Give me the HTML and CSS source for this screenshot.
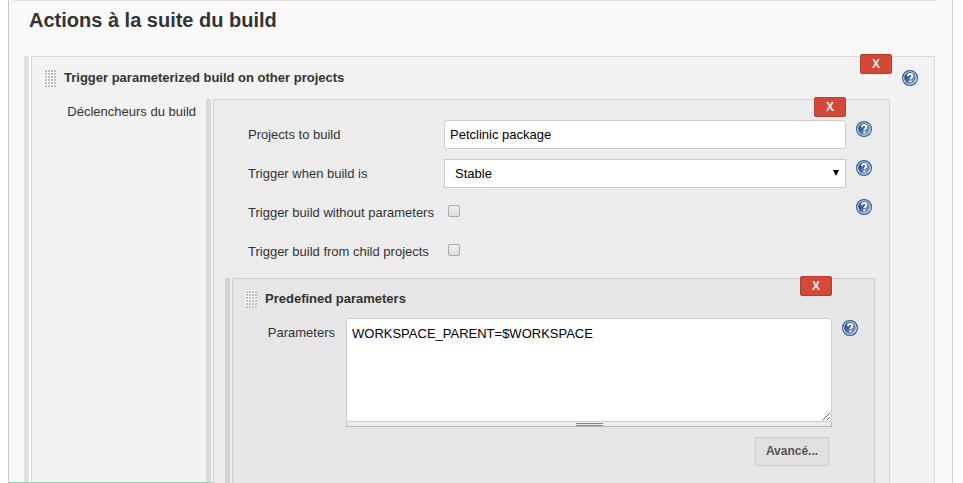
FILE: index.html
```html
<!DOCTYPE html>
<html lang="fr">
<head>
<meta charset="utf-8">
<title>Configuration du build</title>
<link rel="stylesheet" href="styles.css">
</head>
<body>
<svg class="defs" aria-hidden="true">
  <defs>
    <linearGradient id="blue" x1="0" y1="0" x2="1" y2="1">
      <stop offset="0.2" stop-color="#1d4884"/>
      <stop offset="0.9" stop-color="#86a8d4"/>
    </linearGradient>
    <symbol id="help" viewBox="0 0 16 16">
      <circle cx="8" cy="8" r="7.4" fill="#f4f7fb" stroke="#2c5794" stroke-width="1.2"/>
      <circle cx="8" cy="8" r="5.9" fill="url(#blue)"/>
      <path d="M5.7 6.3C5.8 4.7 6.7 4 8.1 4s2.3.8 2.3 2c0 1.5-2 1.7-2 3.3" fill="none" stroke="#fff" stroke-width="1.9"/>
      <path d="M7.4 10.4h2v1.8h-2z" fill="#fff"/>
    </symbol>
    <pattern id="dots" width="3" height="3" patternUnits="userSpaceOnUse">
      <rect width="3" height="3" fill="#fff"/>
      <rect x="1" y="1" width="2" height="2" fill="#ccc"/>
      <rect x="2" y="1" width="1" height="1" fill="#aaa"/>
      <rect x="1" y="2" width="1" height="1" fill="#aaa"/>
    </pattern>
    <symbol id="grip" viewBox="0 0 12 18"><rect width="12" height="18" fill="url(#dots)"/></symbol>
  </defs>
</svg>
<main class="panel">
  <h1>Actions à la suite du build</h1>
  <section class="chunk chunk-outer">
    <div class="box">
      <button type="button" class="delete">X</button>
      <header class="title">
        <svg class="grip"><use href="#grip"/></svg>
        <h2>Trigger parameterized build on other projects</h2>
        <a class="help" href="#" aria-label="Aide"><svg><use href="#help"/></svg></a>
      </header>
      <div class="triggers">
        <div class="label">Déclencheurs du build</div>
        <section class="chunk chunk-middle">
          <div class="box">
            <button type="button" class="delete">X</button>
            <div class="rows">
              <div class="row">
                <label for="projects">Projects to build</label>
                <input class="text" id="projects" type="text" value="Petclinic package">
                <a class="help" href="#" aria-label="Aide"><svg><use href="#help"/></svg></a>
              </div>
              <div class="row">
                <label for="when">Trigger when build is</label>
                <div class="select">
                  <select id="when"><option>Stable</option></select>
                </div>
                <a class="help" href="#" aria-label="Aide"><svg><use href="#help"/></svg></a>
              </div>
              <div class="row">
                <label for="without">Trigger build without parameters</label>
                <input class="check" id="without" type="checkbox">
                <a class="help" href="#" aria-label="Aide"><svg><use href="#help"/></svg></a>
              </div>
              <div class="row">
                <label for="child">Trigger build from child projects</label>
                <input class="check" id="child" type="checkbox">
              </div>
            </div>
            <section class="chunk chunk-inner">
              <div class="box">
                <button type="button" class="delete">X</button>
                <header class="title">
                  <svg class="grip"><use href="#grip"/></svg>
                  <h2>Predefined parameters</h2>
                </header>
                <div class="params">
                  <label class="label" for="params">Parameters</label>
                  <div class="editor">
                    <textarea id="params" spellcheck="false">WORKSPACE_PARENT=$WORKSPACE</textarea>
                    <div class="handle"><span></span></div>
                    <button type="button" class="advanced">Avancé...</button>
                  </div>
                  <a class="help" href="#" aria-label="Aide"><svg><use href="#help"/></svg></a>
                </div>
              </div>
            </section>
          </div>
        </section>
      </div>
    </div>
  </section>
</main>
<div class="bottom-line"></div>
</body>
</html>
```
FILE: styles.css
```css
* {
  box-sizing: border-box;
}

body {
  margin: 0;
  padding: 0 10px 0 8px;
  min-height: 100vh;
  display: flex;
  background: #fff;
  color: #333;
  font: 13px/18px "Liberation Sans", Arial, sans-serif;
}

input,
select,
textarea,
button {
  font: inherit;
  margin: 0;
}

.defs {
  position: absolute;
  width: 0;
  height: 0;
}

.panel {
  flex: 1;
  display: flex;
  flex-direction: column;
  padding: 0 17px 0 15px;
  border: solid #ccc;
  border-width: 0 1px;
  background: #f9f9f9;
}

h1 {
  margin: 0 -2px 25px -10px;
  padding: 8px 0 0 15px;
  border-top: 1px solid #ddd;
  font-size: 20px;
  line-height: 22px;
}

h2 {
  margin: 0;
  flex: 1;
  font-size: 13px;
  line-height: 18px;
}

/* Nested chunks: a drag bar, then a bordered box */
.chunk {
  flex: 1;
  display: flex;
  gap: 2px;
}

.chunk::before {
  content: "";
  width: 5px;
  background: #dfdfdf;
}

.box {
  position: relative;
  flex: 1;
  display: flex;
  flex-direction: column;
  border: solid #d8d8d8;
  border-width: 1px 1px 0;
  background: #f2f2f2;
}

.chunk-middle::before {
  background: #d9d9d9;
}

.chunk-middle > .box {
  border-color: #d3d3d3;
  background: #ececec;
}

.chunk-middle > .box > .delete {
  right: 43px;
}

.chunk-inner {
  margin: 12px 14px 0 11px;
}

.chunk-inner::before {
  background: #d2d2d2;
}

.chunk-inner > .box {
  border-color: #ccc;
  background: #e6e6e6;
}

.delete {
  position: absolute;
  top: -3px;
  right: 42px;
  width: 32px;
  height: 20px;
  padding: 0;
  border: 1px solid #c1392b;
  border-radius: 2px;
  background: #d24939;
  color: #eee;
  font-size: 12px;
  font-weight: bold;
  line-height: 18px;
}

.title {
  display: flex;
  gap: 8px;
  padding: 12px 16px 0 12px;
}

.chunk-inner .title {
  padding-top: 11px;
}

.grip {
  width: 12px;
  height: 18px;
}

.help svg {
  display: block;
  width: 16px;
  height: 16px;
}

.title .help {
  padding-top: 1px;
}

.triggers {
  flex: 1;
  display: grid;
  grid-template-columns: 164px 1fr;
  gap: 10px;
  margin: 12px 44px 0 0;
}

.label {
  padding-top: 4px;
  text-align: right;
}

.rows {
  display: grid;
  gap: 10px;
  padding: 20px 17px 0 34px;
}

.row {
  display: grid;
  grid-template-columns: 186px 1fr 16px;
  gap: 10px;
  height: 29px;
}

.row label {
  line-height: 29px;
  white-space: nowrap;
}

.row .help {
  padding-top: 1px;
}

.text,
.select select,
textarea {
  width: 100%;
  border: 1px solid #ccc;
  background: #fff;
  color: #000;
}

.text {
  height: 29px;
  padding: 0 5px;
  border-radius: 3px;
}

.select {
  position: relative;
}

.select select {
  height: 29px;
  padding: 1px 10px 0;
  border-radius: 0;
  appearance: none;
}

.select::after {
  content: "";
  position: absolute;
  top: 11px;
  right: 7px;
  border: solid transparent;
  border-width: 6px 3px 0;
  border-top-color: #000;
  pointer-events: none;
}

.check {
  appearance: none;
  width: 12px;
  height: 12px;
  margin: 7px 4px;
  border: 1px solid #aaa;
  border-radius: 2px;
  background: linear-gradient(#eee, #ddd);
}

.params {
  display: grid;
  grid-template-columns: 102px 1fr 16px;
  column-gap: 10px;
  margin: 10px 16px 0 0;
}

.params .label {
  padding-top: 6px;
}

.params .help {
  padding-top: 2px;
}

.params .editor {
  display: flex;
  flex-direction: column;
  margin-left: 1px;
}

textarea {
  display: block;
  height: 104px;
  padding: 6px 5px;
  border-radius: 3px;
  resize: vertical;
}

.handle {
  height: 5px;
  padding-top: 1px;
  border: solid #b8b8b0;
  border-width: 0 1px 1px;
  background: #eee;
}

.handle span {
  display: block;
  width: 27px;
  height: 3px;
  margin: 0 auto;
  border: solid #888880;
  border-width: 1px 0;
}

.advanced {
  align-self: flex-end;
  width: 74px;
  height: 29px;
  margin: 10px 3px 16px 0;
  padding: 0 0 2px;
  border: 1px solid #ccc;
  border-radius: 2px;
  background: #e0e0e0;
  color: #555;
  font-size: 12px;
  font-weight: bold;
}

.bottom-line {
  position: fixed;
  bottom: 0;
  left: 9px;
  width: 205px;
  height: 1px;
  background: #a3cfb8;
}
```
